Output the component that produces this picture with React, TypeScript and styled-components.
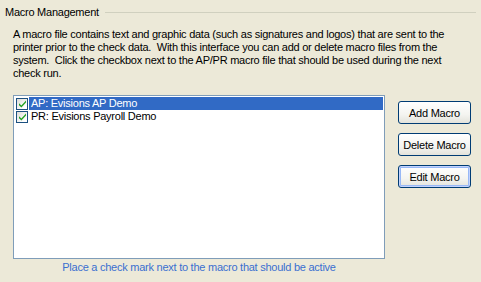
import React, { FC, useState } from 'react'
import styled, { createGlobalStyle, css } from 'styled-components'

const GlobalStyle = createGlobalStyle`
  html, body {
    margin: 0;
    padding: 0;
    background: #ece9d8;
  }
  body {
    font-family: 'Liberation Sans', Arial, sans-serif;
    font-size: 11px;
    letter-spacing: -0.25px;
    color: #000;
  }
`

type Macro = { id: string; label: string; checked: boolean }

const initialMacros: Macro[] = [
  { id: 'ap', label: 'AP: Evisions AP Demo', checked: true },
  { id: 'pr', label: 'PR: Evisions Payroll Demo', checked: true },
]

const CheckBox: FC<{ checked: boolean; onToggle: () => void }> = ({
  checked,
  onToggle,
}) => (
  <Box onClick={onToggle}>
    {checked && (
      <svg width="9" height="9" viewBox="0 0 9 9">
        <path
          d="M1 4.2 L3.4 6.6 L8 1.6 L8 3.6 L3.4 8.6 L1 6.2 Z"
          fill="#21a121"
        />
      </svg>
    )}
  </Box>
)

const App: FC = () => {
  const [macros, setMacros] = useState(initialMacros)
  const [selected, setSelected] = useState('ap')

  const toggle = (id: string) =>
    setMacros(ms =>
      ms.map(m => (m.id === id ? { ...m, checked: !m.checked } : m))
    )

  return (
    <>
      <GlobalStyle />
      <Panel>
        <Header>
          <Title>Macro Management</Title>
          <Rule />
        </Header>
        <Description>
          A macro file contains text and graphic data (such as signatures and
          logos) that are sent to the printer prior to the check data.&nbsp;
          With this interface you can add or delete macro files from the
          system.&nbsp; Click the checkbox next to the AP/PR macro file that
          should be used during the next check run.
        </Description>
        <Content>
          <ListColumn>
            <ListBox>
              {macros.map(m => (
                <Row key={m.id} onClick={() => setSelected(m.id)}>
                  <CheckBox checked={m.checked} onToggle={() => toggle(m.id)} />
                  <RowLabel selected={selected === m.id}>{m.label}</RowLabel>
                </Row>
              ))}
            </ListBox>
            <Hint>Place a check mark next to the macro that should be active</Hint>
          </ListColumn>
          <Buttons>
            <Button>Add Macro</Button>
            <Button>Delete Macro</Button>
            <Button focused>Edit Macro</Button>
          </Buttons>
        </Content>
      </Panel>
    </>
  )
}

export default App

const Panel = styled.div`
  width: 481px;
  height: 282px;
  box-sizing: border-box;
  padding: 5px 5px 0 5px;
`

const Header = styled.div`
  display: flex;
  align-items: center;
  gap: 6px;
  height: 14px;
`

const Title = styled.span`
  line-height: 14px;
  white-space: nowrap;
`

const Rule = styled.div`
  flex: 1;
  height: 1px;
  background: #d0d0bf;
`

const Description = styled.p`
  margin: 9px 12px 0 8px;
  line-height: 13px;
`

const Content = styled.div`
  display: flex;
  margin-top: 15px;
  padding-left: 8px;
`

const ListColumn = styled.div`
  display: flex;
  flex-direction: column;
  width: 372px;
`

const ListBox = styled.div`
  box-sizing: border-box;
  height: 164px;
  background: #fff;
  border: 1px solid #7f9db9;
  padding: 1px 1px 0 2px;
`

const Row = styled.div`
  display: flex;
  align-items: center;
  height: 13px;
`

const Box = styled.span`
  box-sizing: border-box;
  width: 12px;
  height: 12px;
  margin-right: 1px;
  border: 1px solid #1c5180;
  background: linear-gradient(135deg, #dcdcd7 0%, #ffffff 80%);
  display: flex;
  align-items: center;
  justify-content: center;
  flex-shrink: 0;
`

const RowLabel = styled.span<{ selected: boolean }>`
  flex: 1;
  height: 13px;
  line-height: 13px;
  padding-left: 2px;
  white-space: nowrap;
  ${p =>
    p.selected &&
    css`
      background: #316ac5;
      color: #fff;
    `}
`

const Hint = styled.div`
  margin-top: 2px;
  text-align: center;
  color: #3a6fd0;
  line-height: 13px;
`

const Buttons = styled.div`
  display: flex;
  flex-direction: column;
  gap: 9px;
  margin-left: 13px;
  padding-top: 6px;
`

const Button = styled.button<{ focused?: boolean }>`
  box-sizing: border-box;
  width: 73px;
  height: 23px;
  padding: 0;
  font-family: inherit;
  font-size: 11px;
  letter-spacing: inherit;
  color: #000;
  border: 1px solid #003c74;
  border-radius: 3px;
  background: linear-gradient(180deg, #ffffff 0%, #f4f4f0 60%, #e3e3db 100%);
  ${p =>
    p.focused &&
    css`
      box-shadow: inset 0 0 0 1px #c3d3fd, inset 0 0 0 2px #98b8f6;
    `}
`
